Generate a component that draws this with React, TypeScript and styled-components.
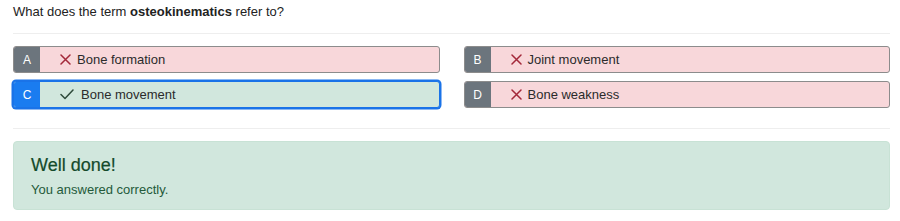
import React from "react";
import styled, { createGlobalStyle, css } from "styled-components";

const Global = createGlobalStyle`
  html, body { margin: 0; padding: 0; background: #fff; }
  body { font-family: "Liberation Sans", Arial, Helvetica, sans-serif; color: #212529; }
`;

const Page = styled.div`
  padding: 0 10px 0 13px;
  width: 877px;
`;

const Question = styled.p`
  margin: 0;
  padding-top: 4px;
  font-size: 13px;
  line-height: 16px;
  color: #222;
  b { font-weight: 700; }
`;

const Rule = styled.hr<{ $top: number }>`
  margin: ${(p) => p.$top}px 0 0;
  border: 0;
  height: 1px;
  background: #eeeeee;
`;

const Options = styled.div`
  margin-top: 12px;
  display: grid;
  grid-template-columns: 1fr 1fr;
  column-gap: 24px;
  row-gap: 8px;
`;

const Option = styled.div<{ $correct?: boolean }>`
  display: flex;
  height: 27px;
  box-sizing: border-box;
  border-radius: 3px;
  border: 1px solid #8c8c8c;
  background: #f8d7da;
  overflow: hidden;
  ${(p) =>
    p.$correct &&
    css`
      background: #d1e7dd;
      border-color: #1a73e8;
      box-shadow: 0 0 0 1.5px #1a73e8;
    `}
`;

const Letter = styled.div<{ $correct?: boolean }>`
  width: 26px;
  flex: none;
  display: flex;
  align-items: center;
  justify-content: center;
  background: ${(p) => (p.$correct ? "#1a7cf0" : "#6c757d")};
  color: #fff;
  font-size: 12px;
`;

const Body = styled.div`
  display: flex;
  align-items: center;
  padding-left: 20px;
  gap: 6px;
  font-size: 13px;
  color: #2b2b2b;
`;

const Alert = styled.div`
  margin-top: 12px;
  height: 69px;
  box-sizing: border-box;
  padding: 12px 17px 0;
  background: #d1e7dd;
  border: 1px solid #c8e2d5;
  border-radius: 4px;
  color: #0f5132;
`;

const AlertTitle = styled.h4`
  margin: 0;
  font-size: 18px;
  line-height: 22px;
  font-weight: 500;
  color: #144a2b;
  -webkit-text-stroke: 0.2px #144a2b;
`;

const AlertText = styled.p`
  margin: 6px 0 0;
  font-size: 13px;
  line-height: 16px;
  color: #245a3a;
`;

const Cross = () => (
  <svg width="11" height="11" viewBox="0 0 11 11">
    <path d="M1 1 L10 10 M10 1 L1 10" stroke="#a3283a" strokeWidth="1.5" fill="none" strokeLinecap="round" />
  </svg>
);

const Check = () => (
  <svg width="14" height="11" viewBox="0 0 14 11" style={{ marginRight: 1 }}>
    <path d="M1 5.5 L5 9.5 L13 1" stroke="#2e4a3a" strokeWidth="1.5" fill="none" strokeLinecap="round" strokeLinejoin="round" />
  </svg>
);

const options = [
  { l: "A", t: "Bone formation", ok: false },
  { l: "B", t: "Joint movement", ok: false },
  { l: "C", t: "Bone movement", ok: true },
  { l: "D", t: "Bone weakness", ok: false },
];

export default function App() {
  return (
    <Page>
      <Global />
      <Question>
        What does the term <b>osteokinematics</b> refer to?
      </Question>
      <Rule $top={13} />
      <Options>
        {options.map((o) => (
          <Option key={o.l} $correct={o.ok}>
            <Letter $correct={o.ok}>{o.l}</Letter>
            <Body>
              {o.ok ? <Check /> : <Cross />}
              <span>{o.t}</span>
            </Body>
          </Option>
        ))}
      </Options>
      <Rule $top={20} />
      <Alert>
        <AlertTitle>Well done!</AlertTitle>
        <AlertText>You answered correctly.</AlertText>
      </Alert>
    </Page>
  );
}
